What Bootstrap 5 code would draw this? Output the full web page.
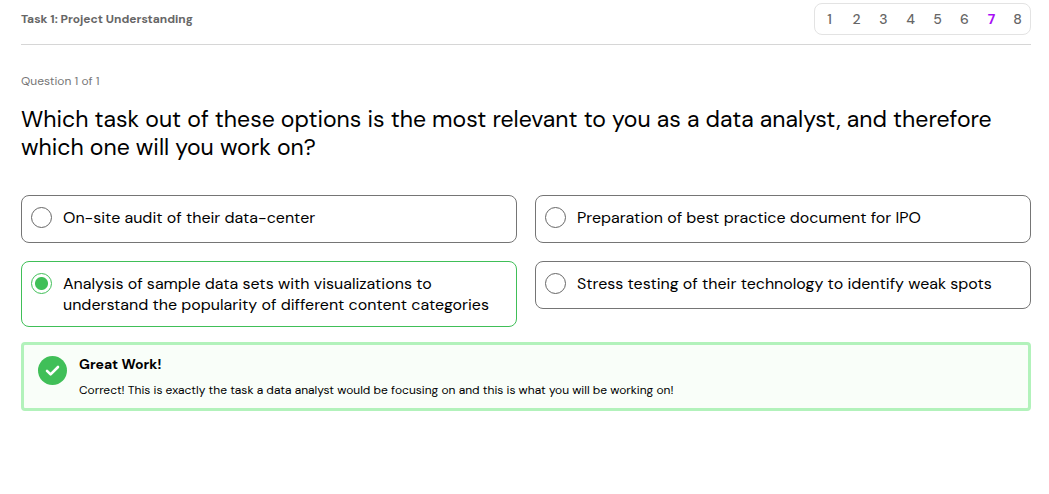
<!DOCTYPE html>
<html lang="en">
<head>
<meta charset="utf-8">
<meta name="viewport" content="width=device-width, initial-scale=1">
<title>Task 1: Project Understanding</title>
<link href="https://cdn.jsdelivr.net/npm/bootstrap@5.3.0/dist/css/bootstrap.min.css" rel="stylesheet">
<style>
  body { font-family: "DM Sans", Inter, "Open Sans", sans-serif; color: #000; background: #fff; }
  .page { padding: 3px 18px 24px 21px; }
  .task-bar { padding-bottom: 9px; border-bottom: 1px solid #d6d6d6; }
  .task-title { font-size: 12px; line-height: 16px; font-weight: 700; color: #666; }
  .steps { border: 1px solid #e3e3e3; border-radius: 8px; height: 32px; padding-left: 1px; }
  .steps a { flex: 0 0 27px; margin-right: 0; font-size: 14px; line-height: 30px; font-weight: 500; color: #666; }
  .steps a:last-child { flex-basis: 25px; }
  .steps a.active { color: #a80df5; font-weight: 700; }
  .question-count { font-size: 12px; line-height: 16px; color: #757575; margin-top: 28px; }
  .question { font-size: 23px; line-height: 28px; font-weight: 400; margin: 16px 0 34px; }
  .options { --bs-gutter-x: 18px; --bs-gutter-y: 18px; }
  .option { gap: 11px; min-height: 48px; padding: 11px 9px; border: 1px solid #757575; border-radius: 8px; font-size: 16px; line-height: 21px; cursor: pointer; }
  .option:has(:checked) { border-color: #40bf58; }
  .option .form-check-input { width: 21px; height: 21px; margin: 0; border: 1px solid #666; }
  .option .form-check-input:checked { border-color: #40bf58; background: radial-gradient(circle, #40bf58 6px, #fff 7px); }
  .feedback { gap: 12px; margin-top: 15px; padding: 10px 14px; background: #f9fef9; border: 3px solid #b2f2bb; border-radius: 4px; color: #000; }
  .feedback svg { margin-top: 1px; }
  .feedback-title { font-size: 14px; line-height: 18px; font-weight: 700; margin-bottom: 9px; }
  .feedback-text { font-size: 12px; line-height: 16px; }
</style>
</head>
<body>
<main class="page">
  <header class="task-bar d-flex justify-content-between align-items-center">
    <h1 class="task-title mb-0">Task 1: Project Understanding</h1>
    <nav class="steps d-flex text-center" aria-label="Steps">
      <a class="text-decoration-none" href="#step-1">1</a>
      <a class="text-decoration-none" href="#step-2">2</a>
      <a class="text-decoration-none" href="#step-3">3</a>
      <a class="text-decoration-none" href="#step-4">4</a>
      <a class="text-decoration-none" href="#step-5">5</a>
      <a class="text-decoration-none" href="#step-6">6</a>
      <a class="text-decoration-none active" href="#step-7" aria-current="step">7</a>
      <a class="text-decoration-none" href="#step-8">8</a>
    </nav>
  </header>
  <p class="question-count mb-0">Question 1 of 1</p>
  <h2 class="question" id="question">Which task out of these options is the most relevant to you as a data analyst, and therefore which one will you work on?</h2>
  <div class="row row-cols-2 options align-items-start" role="radiogroup" aria-labelledby="question">
    <div class="col">
      <label class="option d-flex align-items-start" for="option-1">
        <input class="form-check-input flex-shrink-0" type="radio" name="answer" id="option-1">
        <span>On-site audit of their data-center</span>
      </label>
    </div>
    <div class="col">
      <label class="option d-flex align-items-start" for="option-2">
        <input class="form-check-input flex-shrink-0" type="radio" name="answer" id="option-2">
        <span>Preparation of best practice document for IPO</span>
      </label>
    </div>
    <div class="col">
      <label class="option d-flex align-items-start" for="option-3">
        <input class="form-check-input flex-shrink-0" type="radio" name="answer" id="option-3" checked>
        <span>Analysis of sample data sets with visualizations to understand the popularity of different content categories</span>
      </label>
    </div>
    <div class="col">
      <label class="option d-flex align-items-start" for="option-4">
        <input class="form-check-input flex-shrink-0" type="radio" name="answer" id="option-4">
        <span>Stress testing of their technology to identify weak spots</span>
      </label>
    </div>
  </div>
  <section class="feedback d-flex align-items-start" role="status">
    <svg class="flex-shrink-0" width="29" height="29" viewBox="0 0 29 29" aria-hidden="true">
      <circle cx="14.500" cy="14.500" r="14.500" fill="#40bf58"/>
      <path d="M9 14.800l3.600 3.600 7.400-7.400" fill="none" stroke="#fff" stroke-width="2.600" stroke-linecap="round" stroke-linejoin="round"/>
    </svg>
    <div>
      <h3 class="feedback-title">Great Work!</h3>
      <p class="feedback-text mb-0">Correct! This is exactly the task a data analyst would be focusing on and this is what you will be working on!</p>
    </div>
  </section>
</main>
</body>
</html>
